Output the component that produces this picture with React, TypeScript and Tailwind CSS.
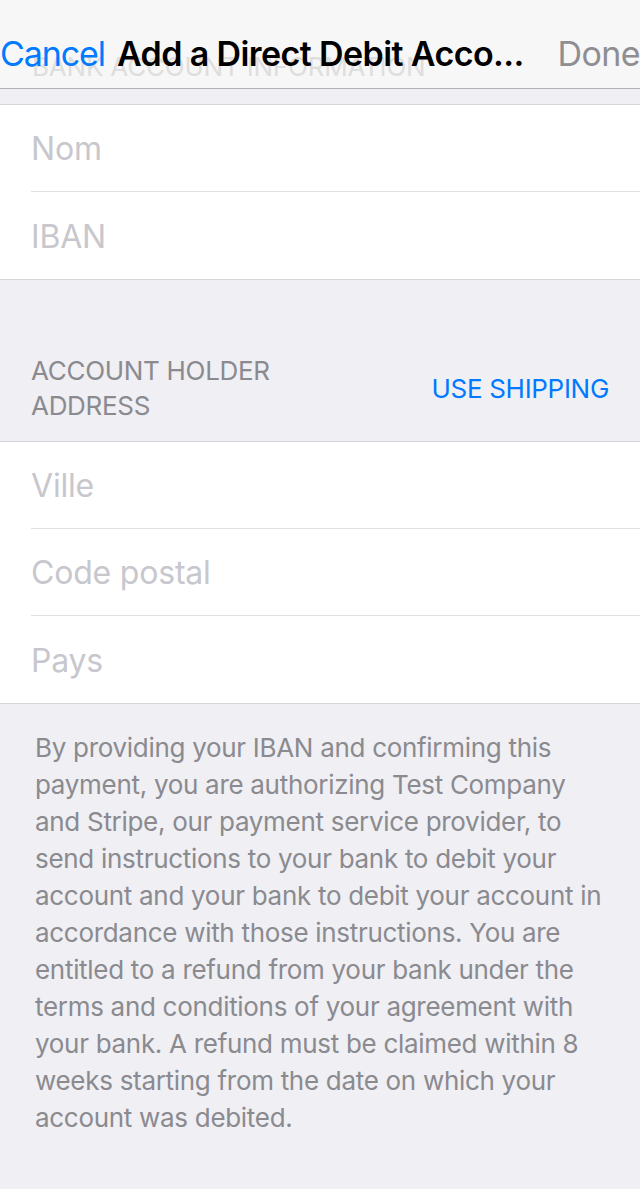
import React from 'react';

const font = { fontFamily: 'Inter, "Noto Sans", sans-serif' };

function Field({ label, last }: { label: string; last?: boolean }) {
  return (
    <div className="pl-[31px]">
      <div className={`h-[87px] flex items-center pt-[2px] text-[32px] tracking-[-0.2px] text-[#c7c7cd] ${last ? '' : 'border-b border-[#e0e0e3]'}`}>
        {label}
      </div>
    </div>
  );
}

export default function App() {
  return (
    <div className="w-[640px] h-[1189px] bg-[#efeff4] overflow-hidden" style={font}>
      {/* Nav bar */}
      <div className="relative h-[89px] bg-[#f7f7f7] border-b border-[#b2b2b2]">
        <div className="absolute left-[32px] top-[54px] text-[26px] leading-none tracking-[-0.2px] text-[#dedede]">
          BANK ACCOUNT INFORMATION
        </div>
        <div className="relative flex items-center h-[70px] pt-[38px] text-[34px] leading-none">
          <span className="text-[#007aff] tracking-[-1.1px]">Cancel</span>
          <span className="ml-[12px] font-semibold text-black tracking-[-0.6px]">Add a Direct Debit Acco...</span>
          <span className="ml-auto text-[#8e8e93] tracking-[-0.6px]">Done</span>
        </div>
      </div>

      {/* Bank account section */}
      <div className="mt-[15px] bg-white border-y border-[#d6d6da]">
        <Field label="Nom" />
        <Field label="IBAN" last />
      </div>

      {/* Address header */}
      <div className="h-[161px] flex items-end pb-[18px] pl-[31px] pr-[31px]">
        <div className="flex w-full items-center">
          <div className="text-[26px] leading-[35px] text-[#8a8a8f] tracking-[-0.3px]">
            ACCOUNT HOLDER
            <br />
            ADDRESS
          </div>
          <div className="ml-auto text-[26px] text-[#007aff] tracking-[-0.3px]">USE SHIPPING</div>
        </div>
      </div>

      {/* Address section */}
      <div className="bg-white border-y border-[#d6d6da]">
        <Field label="Ville" />
        <Field label="Code postal" />
        <Field label="Pays" last />
      </div>

      {/* Mandate text */}
      <p className="pl-[35px] pr-[33px] pt-[25px] text-[26px] leading-[37px] text-[#8a8a8f] tracking-[-0.3px]">
        By providing your IBAN and confirming this payment, you are authorizing Test Company and Stripe, our payment
        service provider, to send instructions to your bank to debit your account and your bank to debit your account
        in accordance with those instructions. You are entitled to a refund from your bank under the terms and
        conditions of your agreement with your bank. A refund must be claimed within 8 weeks starting from the date on
        which your account was debited.
      </p>
    </div>
  );
}
